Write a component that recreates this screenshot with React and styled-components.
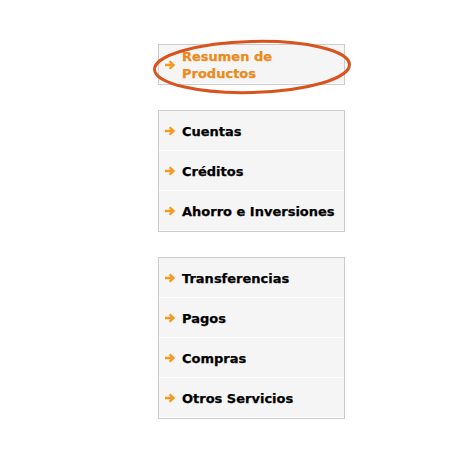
import React from 'react';
import styled, { createGlobalStyle } from 'styled-components';

const GlobalStyle = createGlobalStyle`
  html, body {
    margin: 0;
    padding: 0;
    background: #ffffff;
  }
  body {
    font-family: "DejaVu Sans", Verdana, sans-serif;
  }
`;

const menuGroups = [
  ['Cuentas', 'Créditos', 'Ahorro e Inversiones'],
  ['Transferencias', 'Pagos', 'Compras', 'Otros Servicios'],
];

const Page = styled.div`
  width: 472px;
  height: 452px;
  padding: 44px 0 0 158px;
  box-sizing: border-box;
`;

const Menu = styled.div`
  width: 187px;
  display: flex;
  flex-direction: column;
  gap: 25px;
`;

const Box = styled.div`
  position: relative;
  border: 1px solid #cccccc;
  background-color: #f5f5f5;
  display: flex;
  flex-direction: column;
`;

const Item = styled.div`
  height: ${(p) => (p.$tall ? 39 : 40)}px;
  box-sizing: border-box;
  display: flex;
  align-items: center;
  padding: ${(p) => (p.$tall ? '2px 0 0 6px' : '1px 0 0 6px')};
  gap: 7px;
  border-bottom: 1px solid #ffffff;
  font-size: 13px;
  font-weight: bold;
  line-height: 17px;
  color: ${(p) => (p.$active ? '#ec8a1c' : '#000000')};
  -webkit-text-stroke: 0.25px currentColor;
  cursor: pointer;
  :last-child {
    border-bottom: none;
  }
`;

const Arrow = styled.svg`
  flex: none;
  width: 10px;
  height: 10px;
`;

const Ring = styled.svg`
  position: absolute;
  left: -8px;
  top: -6px;
  pointer-events: none;
  overflow: visible;
`;

const ArrowIcon = () => (
  <Arrow viewBox="0 0 10 10">
    <path d="M0 5 H8.2 M4.6 1.2 L8.5 5 L4.6 8.8" fill="none" stroke="#f39a1f" strokeWidth="2.3" strokeLinejoin="miter" />
  </Arrow>
);

const MenuItem = ({ label, active, tall }) => (
  <Item $active={active} $tall={tall}>
    <ArrowIcon />
    <span>{label}</span>
  </Item>
);

const App = () => (
  <Page>
    <GlobalStyle />
    <Menu>
      <Box>
        <MenuItem label={<>Resumen de<br />Productos</>} active tall />
        <Ring width="202" height="56" viewBox="0 0 202 56">
          <ellipse cx="101" cy="28" rx="97.5" ry="25.5" fill="none" stroke="#d9531e" strokeWidth="3" transform="rotate(-1.5 101 28)" />
        </Ring>
      </Box>
      {menuGroups.map((group, i) => (
        <Box key={i}>
          {group.map((label) => (
            <MenuItem key={label} label={label} />
          ))}
        </Box>
      ))}
    </Menu>
  </Page>
);

export default App;
